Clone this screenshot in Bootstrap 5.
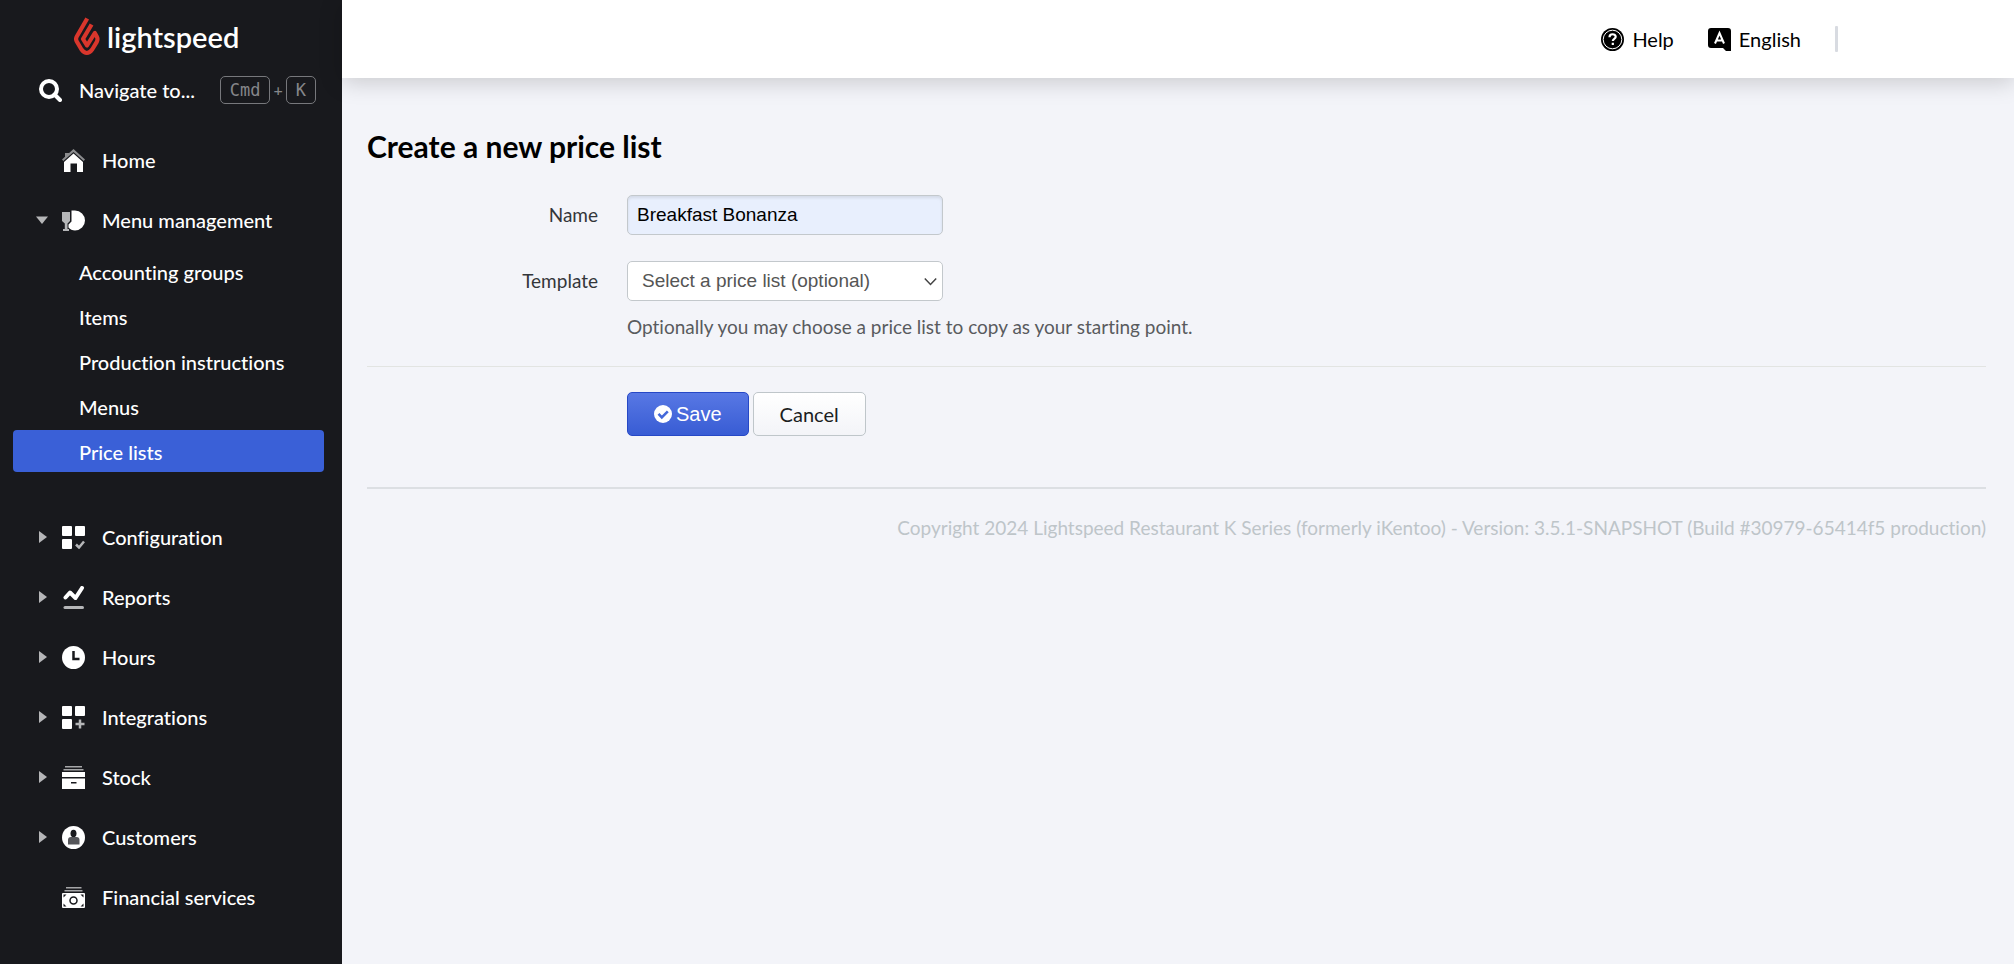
<!DOCTYPE html>
<html lang="en">
<head>
<meta charset="utf-8">
<meta name="viewport" content="width=device-width, initial-scale=1">
<title>Create a new price list</title>
<link href="https://cdn.jsdelivr.net/npm/bootstrap@5.3.0/dist/css/bootstrap.min.css" rel="stylesheet">
<style>
  body { font-family: Lato, "Liberation Sans", sans-serif; font-size: 20px; line-height: 28px; font-variant-ligatures: none; background: #f3f4f9; color: #000; }
  a { color: inherit; text-decoration: none; }
  .side { width: 342px; background: #18191d; color: #fff; font-weight: 500; }
  .brand { height: 68px; padding: 5px 0 0 74px; gap: 7px; font-size: 29px; line-height: 40px; font-weight: 600; }
  .search { height: 44px; padding: 0 26px 0 39px; }
  .search a { gap: 17px; }
  .keys { gap: 3px; color: #85868a; font-size: 16px; }
  .keys kbd { font: 17px/26px "DejaVu Sans Mono", monospace; background: none; color: #85868a; border: 1px solid #77787c; border-radius: 5px; padding: 0 9px; }
  .menu-top { padding-top: 18px; }
  .item { height: 60px; padding-left: 36px; }
  .item .caret { width: 12px; height: 12px; margin-right: 14px; fill: #b5b6b8; }
  .item .glyph { width: 23px; height: 23px; margin-right: 17px; }
  .sub { padding: 0 18px 0 13px; gap: 3px; margin-bottom: 35px; }
  .sub a { height: 42px; padding: 8px 0 0 66px; line-height: 28px; border-radius: 4px; }
  .sub a.active { background: #3a60d7; }
  .topbar { height: 78px; background: #fff; padding-right: 176px; gap: 34px; box-shadow: 0 4px 22px rgba(0,0,0,.18); }
  .topbar a { gap: 8px; }
  .split { width: 3px; height: 26px; background: #d8dbe1; border-radius: 1px; }
  .page { padding: 46px 28px 0 25px; }
  h1 { font-size: 30px; line-height: 44px; font-weight: 700; margin-bottom: 27px; }
  .line { min-height: 40px; gap: 29px; }
  .line label, .spacer { width: 231px; text-align: right; flex: none; }
  .line label { color: #33363a; font-size: 19px; }
  .line .form-control, .line .form-select { width: 316px; height: 40px; font: 19px/28px "Liberation Sans", Arial, sans-serif; border: 1px solid #c3c8cc; border-radius: 5px; }
  .line .form-control { background: #e8effd; color: #000; padding: 5px 9px; box-shadow: inset 0 2px 3px rgba(0,0,0,.09); }
  .line .form-select { color: #555; padding: 5px 30px 5px 14px; background-position: right 5px center; background-size: 13px 13px;
    background-image: url("data:image/svg+xml,%3csvg xmlns='http://www.w3.org/2000/svg' viewBox='0 0 13 13'%3e%3cpath fill='none' stroke='%23444' stroke-width='1.5' d='M.8 3.5l5.7 6 5.7-6'/%3e%3c/svg%3e"); }
  .first { margin-bottom: 26px; }
  .hint { color: #595b5e; font-size: 19px; margin-top: 12px; }
  .rule { height: 1px; background: #e2e4e2; margin: 25px 0; }
  .rule.deep { height: 2px; background: #dcdfe3; margin: 51px 0 25px; }
  .btn { height: 44px; border-radius: 5px; font-size: 20px; line-height: 28px; padding: 7px 26px; }
  .save { background: linear-gradient(#5878e4, #385cd4); border-color: #2648c6; color: #fff; font-family: "Liberation Sans", Arial, sans-serif; gap: 4px; }
  .cancel { background: linear-gradient(#fff, #f3f4f8); border-color: #bfc6ca; color: #1c1e22; }
  .copy { color: #bec5c9; font-size: 19px; }
</style>
</head>
<body>
<div class="d-flex min-vh-100">
  <nav class="side flex-shrink-0" aria-label="Main">
    <a class="brand d-flex align-items-center" href="#">
      <svg width="26" height="39" viewBox="0 0 26 39" fill="none" stroke="#d9362c" stroke-width="4.2" stroke-linejoin="round"><path d="M13.200 1.500 2.800 19.500Q1.400 22 2.800 24.500L7.500 32.500Q12.800 39.500 18.200 32.500L22.800 24.800Q24.200 22 22.800 19.500L20.800 16 13 28.500 9 22 17.600 7.500"/></svg>
      <span>lightspeed</span>
    </a>
    <div class="search d-flex align-items-center justify-content-between">
      <a class="d-flex align-items-center" href="#">
        <svg width="23" height="23" viewBox="0 0 23 23" fill="none" stroke="#fff"><circle cx="10" cy="10" r="8" stroke-width="4"/><path d="M15.500 15.500l5.500 5.500" stroke-width="4" stroke-linecap="round"/></svg>
        <span>Navigate to...</span>
      </a>
      <span class="keys d-flex align-items-center"><kbd>Cmd</kbd>+<kbd>K</kbd></span>
    </div>
    <div class="menu-top d-flex flex-column">
      <a class="item d-flex align-items-center" href="#">
        <svg class="caret"></svg>
        <svg class="glyph" viewBox="0 0 23 23"><path fill="#8b8c8e" d="M3 4h4v2L3 10zM11.500 0 23 10.500 21.700 12 11.500 3 1.300 12 0 10.500Z"/><path fill="#fff" d="M11.500 4.500 21 13v10h-6v-8.500H8.500V23H2V13Z"/></svg>
        Home</a>
      <a class="item d-flex align-items-center" href="#" aria-expanded="true">
        <svg class="caret" viewBox="0 0 12 12"><path d="M0 2.500h12L6 10z"/></svg>
        <svg class="glyph" viewBox="0 0 23 23"><path fill="#b5b6b8" d="M0 3h8v9l-2.500 2.500V20H7v2H1v-2h1.800v-5.500L0 12z"/><path fill="#fff" d="M9.500 1.500h3.500a10 10 0 1 1 0 20q-4 0-6.500-3v-3l3-3z"/></svg>
        Menu management</a>
    </div>
    <div class="sub d-flex flex-column">
      <a href="#">Accounting groups</a>
      <a href="#">Items</a>
      <a href="#">Production instructions</a>
      <a href="#">Menus</a>
      <a class="active" href="#" aria-current="page">Price lists</a>
    </div>
    <div class="d-flex flex-column">
      <a class="item d-flex align-items-center" href="#">
        <svg class="caret" viewBox="0 0 12 12"><path d="M3 0l8 6-8 6z"/></svg>
        <svg class="glyph" viewBox="0 0 23 23"><g fill="#fff"><rect width="10" height="10" rx="1"/><rect x="13" width="10" height="10" rx="1"/><rect y="13" width="10" height="10" rx="1"/></g><path d="M14 18.500l3 3 5-6" fill="none" stroke="#b5b6b8" stroke-width="2.500"/></svg>
        Configuration</a>
      <a class="item d-flex align-items-center" href="#">
        <svg class="caret" viewBox="0 0 12 12"><path d="M3 0l8 6-8 6z"/></svg>
        <svg class="glyph" viewBox="0 0 23 23" fill="none" stroke-linecap="round"><path d="M3.500 11.500 8 6.500l5.500 5.500L20 2" stroke="#fff" stroke-width="4" stroke-linejoin="round"/><path d="M3 21.500h17.500" stroke="#b5b6b8" stroke-width="3"/></svg>
        Reports</a>
      <a class="item d-flex align-items-center" href="#">
        <svg class="caret" viewBox="0 0 12 12"><path d="M3 0l8 6-8 6z"/></svg>
        <svg class="glyph" viewBox="0 0 23 23"><circle cx="11.500" cy="11.500" r="11.500" fill="#fff"/><path d="M11.500 5v8H17.500" fill="none" stroke="#18191d" stroke-width="2.500"/></svg>
        Hours</a>
      <a class="item d-flex align-items-center" href="#">
        <svg class="caret" viewBox="0 0 12 12"><path d="M3 0l8 6-8 6z"/></svg>
        <svg class="glyph" viewBox="0 0 23 23"><g fill="#fff"><rect width="10" height="10" rx="1"/><rect x="13" width="10" height="10" rx="1"/><rect y="13" width="10" height="10" rx="1"/></g><path d="M18 13.500v9M13.500 18h9" fill="none" stroke="#b5b6b8" stroke-width="2.500"/></svg>
        Integrations</a>
      <a class="item d-flex align-items-center" href="#">
        <svg class="caret" viewBox="0 0 12 12"><path d="M3 0l8 6-8 6z"/></svg>
        <svg class="glyph" viewBox="0 0 23 23"><path fill="#a5a6a8" d="M3 0h17v1.500H3zM1.500 3h20v1.500h-20z"/><path fill="#fff" d="M0 6h23v5H0zM0 12.500h23V23H0z"/><path fill="#18191d" d="M9 16h5.500v1.500H9z"/></svg>
        Stock</a>
      <a class="item d-flex align-items-center" href="#">
        <svg class="caret" viewBox="0 0 12 12"><path d="M3 0l8 6-8 6z"/></svg>
        <svg class="glyph" viewBox="0 0 23 23"><circle cx="11.500" cy="11.500" r="11.500" fill="#fff"/><ellipse cx="11.500" cy="7.500" rx="3" ry="3.800" fill="#18191d"/><path fill="#55565a" d="M6 18.500v-4.500q0-3 3-3h5.500q3 0 3 3v4.500z"/></svg>
        Customers</a>
      <a class="item d-flex align-items-center" href="#">
        <svg class="caret"></svg>
        <svg class="glyph" viewBox="0 0 23 23"><path fill="#a5a6a8" d="M4 1h15.500v1.500H4zM2.500 4h18v1.500h-18z"/><rect y="7" width="23" height="15" rx="1" fill="#fff"/><circle cx="11.500" cy="14.500" r="3.500" fill="none" stroke="#18191d" stroke-width="1.500"/><path fill="#18191d" d="M1.500 8.500h3l-3 3zM21.500 8.500h-3l3 3zM1.500 20.500h3l-3-3zM21.500 20.500h-3l3-3z"/></svg>
        Financial services</a>
    </div>
  </nav>

  <div class="flex-grow-1">
    <header class="topbar d-flex align-items-center justify-content-end">
      <a class="d-flex align-items-center" href="#">
        <svg width="23" height="23" viewBox="0 0 23 23"><circle cx="11.500" cy="11.500" r="11.500"/><circle cx="11.500" cy="11.500" r="9.300" fill="none" stroke="#fff"/><path d="M8.500 9.200c0-4 6.200-3.700 6.200-.4 0 2.200-2.900 2-2.900 4.200M11.800 14.800v2.300" fill="none" stroke="#fff" stroke-width="2.200"/></svg>
        Help</a>
      <a class="d-flex align-items-center" href="#">
        <svg width="23" height="23" viewBox="0 0 23 23"><path d="M3 0h17q3 0 3 3v20h-5l-3-3H3q-3 0-3-3V3q0-3 3-3z"/><path d="M7 15.500 11.500 5 16 15.500M8.500 12.500h6" fill="none" stroke="#fff" stroke-width="2"/></svg>
        English</a>
      <span class="split"></span>
    </header>
    <main class="page">
      <h1>Create a new price list</h1>
      <form>
        <div class="line first d-flex align-items-center">
          <label for="name">Name</label>
          <input class="form-control" id="name" type="text" value="Breakfast Bonanza">
        </div>
        <div class="line d-flex align-items-center">
          <label for="template">Template</label>
          <select class="form-select" id="template"><option>Select a price list (optional)</option></select>
        </div>
        <div class="line d-flex">
          <span class="spacer"></span>
          <div class="hint">Optionally you may choose a price list to copy as your starting point.</div>
        </div>
        <div class="rule"></div>
        <div class="line d-flex">
          <span class="spacer"></span>
          <div class="d-flex gap-1">
            <button class="btn save d-flex align-items-center" type="submit"><svg width="18" height="18" viewBox="0 0 18 18"><circle cx="9" cy="9" r="9" fill="#fff"/><path d="M4.500 8.800l3.300 3.500 6-6" fill="none" stroke="#4468da" stroke-width="2.600"/></svg>Save</button>
            <button class="btn cancel" type="button">Cancel</button>
          </div>
        </div>
      </form>
      <footer>
        <div class="rule deep"></div>
        <div class="copy text-end">Copyright 2024 Lightspeed Restaurant K Series (formerly iKentoo) - Version: 3.5.1-SNAPSHOT (Build #30979-65414f5 production)</div>
      </footer>
    </main>
  </div>
</div>
<script src="https://cdn.jsdelivr.net/npm/bootstrap@5.3.0/dist/js/bootstrap.bundle.min.js"></script>
</body>
</html>
